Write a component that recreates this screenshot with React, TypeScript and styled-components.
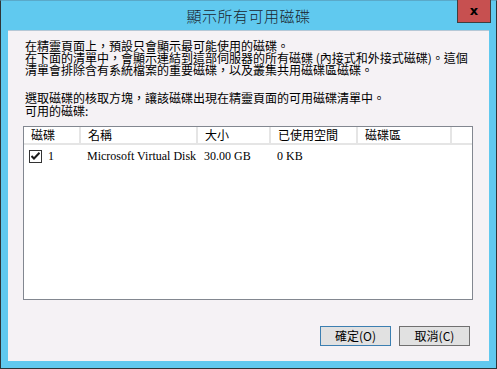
import * as React from "react";
import styled, { createGlobalStyle } from "styled-components";

const GlobalStyle = createGlobalStyle`
  html, body {
    margin: 0;
    padding: 0;
    background: #ffffff;
  }
  body {
    font-family: "Noto Sans CJK TC", sans-serif;
  }
`;

const columns = [
  { key: "disk", label: "磁碟", width: 57 },
  { key: "name", label: "名稱", width: 117 },
  { key: "size", label: "大小", width: 73 },
  { key: "used", label: "已使用空間", width: 87 },
  { key: "volume", label: "磁碟區", width: 94 },
];

const disks = [
  { id: "1", name: "Microsoft Virtual Disk", size: "30.00 GB", used: "0 KB", checked: true },
];

const CheckIcon = () => (
  <svg width="9" height="8" viewBox="0 0 9 8">
    <path d="M0.5 4 L3 6.5 L8.5 0.8" fill="none" stroke="#1b1b1b" strokeWidth="2" />
  </svg>
);

const App = () => {
  const [rows, setRows] = React.useState(disks);

  const toggle = (id: string) =>
    setRows(rows.map((r) => (r.id === id ? { ...r, checked: !r.checked } : r)));

  return (
    <>
      <GlobalStyle />
      <Window>
        <TitleBar>
          <Title>顯示所有可用磁碟</Title>
          <Close>x</Close>
        </TitleBar>
        <Client>
          <Intro $line={12}>
            <p>在精靈頁面上，預設只會顯示最可能使用的磁碟。</p>
            <p>
              在下面的清單中，會顯示連結到這部伺服器的所有磁碟 (內接式和外接式磁碟)。這個
            </p>
            <p>清單會排除含有系統檔案的重要磁碟，以及叢集共用磁碟區磁碟。</p>
          </Intro>
          <Intro $line={13} $last>
            <p>選取磁碟的核取方塊，讓該磁碟出現在精靈頁面的可用磁碟清單中。</p>
            <p>可用的磁碟:</p>
          </Intro>
          <ListBox>
            <HeaderRow>
              {columns.map((c) => (
                <HeaderCell key={c.key} $w={c.width}>
                  {c.label}
                </HeaderCell>
              ))}
              <HeaderFill />
            </HeaderRow>
            {rows.map((r) => (
              <Row key={r.id}>
                <Cell $w={columns[0].width}>
                  <Check onClick={() => toggle(r.id)}>{r.checked && <CheckIcon />}</Check>
                  {r.id}
                </Cell>
                <Cell $w={columns[1].width}>{r.name}</Cell>
                <Cell $w={columns[2].width}>{r.size}</Cell>
                <Cell $w={columns[3].width}>{r.used}</Cell>
                <Cell $w={columns[4].width}></Cell>
              </Row>
            ))}
          </ListBox>
          <Buttons>
            <Button $default>確定(O)</Button>
            <Button>取消(C)</Button>
          </Buttons>
        </Client>
      </Window>
    </>
  );
};
export default App;

const Window = styled.div`
  position: relative;
  width: 497px;
  height: 369px;
  box-sizing: border-box;
  border: 1px solid #2e3436;
  border-top-color: #5aa9c9;
  background: #60c9ef;
  display: flex;
  flex-direction: column;
  padding: 0 7px 7px 7px;
`;

const TitleBar = styled.div`
  height: 29px;
  display: flex;
  align-items: center;
  justify-content: center;
`;

const Title = styled.div`
  font-family: "Noto Sans CJK TC", sans-serif;
  font-size: 15px;
  font-weight: 300;
  color: #1a252e;
  margin-top: -1px;
  letter-spacing: 0.5px;
`;

const Close = styled.div`
  position: absolute;
  top: -1px;
  right: 5px;
  width: 32px;
  height: 20px;
  background: #c75050;
  border: 1px solid #3f3f3f;
  border-top: 0;
  display: flex;
  align-items: center;
  justify-content: center;
  font-family: "DejaVu Sans", sans-serif;
  font-weight: 900;
  font-size: 13px;
  color: #000;
  line-height: 1;
  padding-bottom: 2px;
  box-sizing: content-box;
`;

const Client = styled.div`
  flex: 1;
  background: #f5f2f5;
  border-top: 1px solid #b6c8d6;
  display: flex;
  flex-direction: column;
  padding: 9px 16px 15px 15px;
`;

const Intro = styled.div<{ $line: number; $last?: boolean }>`
  font-family: "Noto Sans CJK TC", sans-serif;
  font-size: 12px;
  line-height: ${(p) => p.$line}px;
  color: #000;
  padding-left: 2px;
  margin-bottom: ${(p) => (p.$last ? 9 : 15)}px;
  p {
    margin: 0;
    height: ${(p) => p.$line}px;
    white-space: nowrap;
  }
`;

const ListBox = styled.div`
  height: 172px;
  border: 1px solid #828790;
  background: #ffffff;
  display: flex;
  flex-direction: column;
  font-family: "Liberation Serif", "Noto Sans CJK TC", serif;
  font-size: 12px;
  color: #000;
`;

const HeaderRow = styled.div`
  display: flex;
  height: 16px;
  border-bottom: 2px solid #e5e5e5;
`;

const HeaderCell = styled.div<{ $w: number }>`
  width: ${(p) => p.$w}px;
  box-sizing: border-box;
  border-right: 2px solid #e5e5e5;
  padding-left: 7px;
  font-family: "Noto Sans CJK TC", sans-serif;
  line-height: 16px;
  white-space: nowrap;
`;

const HeaderFill = styled.div`
  flex: 1;
`;

const Row = styled.div`
  display: flex;
  height: 18px;
  align-items: center;
  margin-top: 2px;
`;

const Cell = styled.div<{ $w: number }>`
  width: ${(p) => p.$w}px;
  box-sizing: border-box;
  padding-left: 6px;
  display: flex;
  align-items: center;
  gap: 6px;
  white-space: nowrap;
  &:first-child {
    padding-left: 5px;
  }
`;

const Check = styled.span`
  width: 11px;
  height: 11px;
  border: 1px solid #333;
  background: #fff;
  display: inline-flex;
  align-items: center;
  justify-content: center;
  cursor: pointer;
`;

const Buttons = styled.div`
  margin-top: auto;
  display: flex;
  justify-content: flex-end;
  gap: 8px;
  padding-right: 3px;
`;

const Button = styled.button<{ $default?: boolean }>`
  width: 71px;
  height: 20px;
  box-sizing: border-box;
  background: #e1e1e1;
  border: 1px solid ${(p) => (p.$default ? "#3c7fb1" : "#707070")};
  font-family: "Noto Sans CJK TC", sans-serif;
  font-size: 12px;
  color: #000;
  padding: 0;
  line-height: 18px;
  cursor: pointer;
`;
